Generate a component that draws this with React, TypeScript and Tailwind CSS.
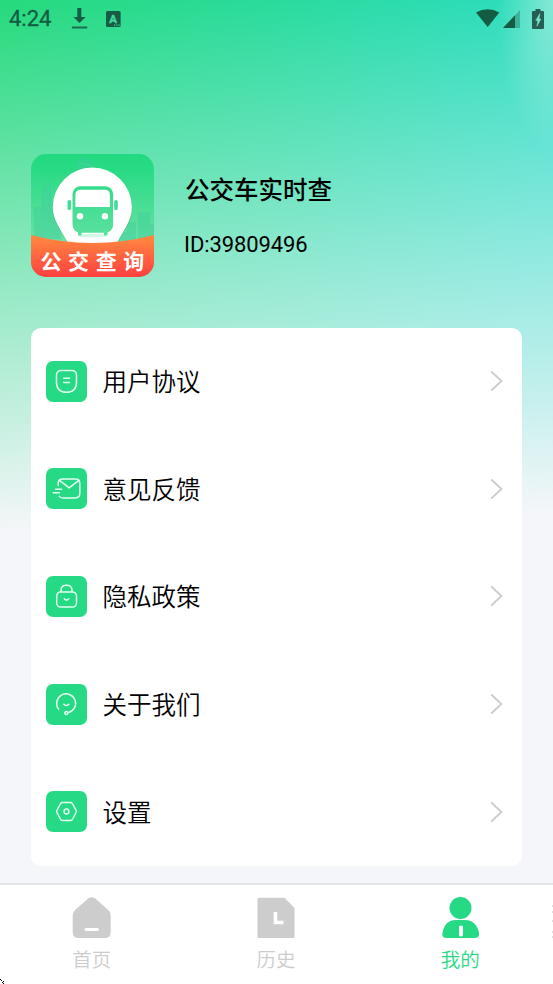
import type { ReactNode } from 'react';

type MenuItem = { label: string; icon: ReactNode };

const menu: MenuItem[] = [
  {
    label: '用户协议',
    icon: (
      <>
        <path d="M15.5 9.600h10q5 0 5 5v6.300q0 10.300-10 10.300t-10-10.300v-6.300q0-5 5-5z" />
        <path d="M17.700 17.200h5.800M17.700 21.600h5.800" />
      </>
    ),
  },
  {
    label: '意见反馈',
    icon: (
      <>
        <path d="M12.200 17.500v-2q0-4.600 4.600-4.600h12.400q4.600 0 4.600 4.600v9.800q0 4.600-4.600 4.600H16.800q-2.400 0-3.500-1.500" />
        <path d="M13.400 12.300l9.800 7.600 9.600-7.600M9.700 21.300h6M7.300 24.700h6" />
      </>
    ),
  },
  {
    label: '隐私政策',
    icon: (
      <>
        <rect x="10.700" y="15.900" width="19.800" height="15.200" rx="4.200" />
        <path d="M15 15.600v-1.200q0-5.200 5.500-5.200t5.500 5.200v1.200M18.300 22.700q2.200 2.600 4.400 0" />
      </>
    ),
  },
  {
    label: '关于我们',
    icon: (
      <>
        <path d="M12.700 25.300a9.500 9.500 0 1 1 9.400 3.400" />
        <circle cx="20.300" cy="29" r="1.500" />
        <path d="M17.900 20.200q2.500 2.600 5 0" />
      </>
    ),
  },
  {
    label: '设置',
    icon: (
      <>
        <path d="M16.500 11.400h8q1.200 0 1.800 1l3.800 6.900q.6 1.100 0 2.200l-3.800 7q-.6 1-1.800 1h-8q-1.200 0-1.800-1l-3.800-7q-.6-1.100 0-2.200l3.800-6.900q.6-1 1.800-1z" />
        <circle cx="20.500" cy="20.500" r="2.400" />
      </>
    ),
  },
];

function StatusBar() {
  return (
    <div className="flex h-[38px] items-center justify-between pl-[9px] pr-[9px] text-[#145c43]">
      <div className="flex items-center">
        <span className="w-[62px] font-['Roboto'] text-[22px] leading-[38px] [-webkit-text-stroke:0.3px_#145c43]">4:24</span>
        <svg className="h-[22px] w-[17px]" viewBox="0 0 17 22">
          <path d="M6.300 0h4v9h4.300L8.500 15 2.500 9h3.800z" fill="currentColor" />
          <path d="M.900 18.500h15.300v2H.900z" fill="currentColor" opacity=".85" />
        </svg>
        <svg className="ml-[18px] h-4 w-[15px]" viewBox="0 0 15 16">
          <rect width="14.600" height="16" rx="1.500" fill="currentColor" />
          <text x="7.200" y="12" textAnchor="middle" fill="#45d99c" stroke="#45d99c" strokeWidth=".4" className="font-['Roboto'] text-[11.500px] font-bold">A</text>
          <path d="M8 14.200h1.200M10.300 14.200h1.200M12.500 14.200h1.200" stroke="#45d99c" strokeWidth="1.200" />
        </svg>
      </div>
      <div className="flex items-center">
        <svg className="h-5 w-6" viewBox="0 0 24 20" fill="currentColor">
          <path d="M0 3.500Q11.700-2.800 23.300 3.500L11.700 18z" />
        </svg>
        <svg className="ml-[3px] mr-px h-[18px] w-[17px]" viewBox="0 0 17 18" fill="currentColor">
          <path d="M17 0v18H0z" opacity=".35" />
          <path d="M12 5.300V18H0z" />
        </svg>
        <svg className="ml-[11.500px] h-5 w-3" viewBox="0 0 12 20">
          <path d="M3.500 0h5v2H11q1 0 1 1v16q0 1-1 1H1q-1 0-1-1V3q0-1 1-1h2.500z" fill="#255f54" />
          <path d="M7.900 4.600L3.700 11.400h2.200l-1 5.800 4-7.200H7z" fill="#7be7d0" stroke="#7be7d0" strokeWidth=".5" />
        </svg>
      </div>
    </div>
  );
}

function AppLogo() {
  return (
    <svg className="h-[123px] w-[123px] shrink-0 rounded-[15px]" viewBox="0 0 123 123">
      <defs>
        <linearGradient id="sky" x1="0" y1="0" x2="0" y2="1">
          <stop offset="0" stopColor="#23d97f" />
          <stop offset=".12" stopColor="#29db84" />
          <stop offset=".7" stopColor="#68e0a5" />
        </linearGradient>
        <linearGradient id="banner" x1="0" y1="0" x2="0" y2="1">
          <stop offset="0.1" stopColor="#ff843f" />
          <stop offset="1" stopColor="#fe3f40" />
        </linearGradient>
        <linearGradient id="bus" x1="0" y1="32" x2="0" y2="82" gradientUnits="userSpaceOnUse">
          <stop offset="0" stopColor="#35dc8b" />
          <stop offset="1" stopColor="#5be0a0" />
        </linearGradient>
      </defs>
      <rect width="123" height="123" fill="url(#sky)" />
      <g fill="#3fcb9c" opacity=".4">
        <path d="M46 6l4-3 12 4v10H48zM11 34l9-6v60h-9zM3 53h10v32H3zM20 50h10v35H20zM107 58h12v28h-12zM96 68h9v20h-9zM88 78h10v10H88zM117 70h6v14h-6z" />
      </g>
      <g stroke="#4bdda0" strokeWidth=".8" opacity=".7">
        <path d="M14 33v50M17 31v52M6 55v27M9 55v27M24 52v32M27 52v32M109 62h8M109 66h8M109 70h8M109 74h8M109 78h8M98 72v14M101 72v14M48 9l13 3M48 13l13 3" />
      </g>
      <path d="M61.300 14.400a40 40 0 0 1 40 40c0 13-9 24-16.600 36H38C31 78 21.300 67 21.300 54.400a40 40 0 0 1 40-40z" fill="#219d68" opacity=".35" />
      <path d="M61.300 13.600a39.600 39.600 0 0 1 39.600 39.600c0 13.500-8.500 23.500-15.700 36.800H37.700C30.500 76.500 21.700 66.500 21.700 53.200a39.600 39.600 0 0 1 39.600-39.600z" fill="#fff" />
      <ellipse cx="61.500" cy="81.500" rx="15" ry="1.800" fill="#d3f7e5" />
      <g fill="url(#bus)">
        <rect x="41.500" y="32.200" width="40.600" height="46.600" rx="8" />
        <rect x="36.500" y="46" width="3.600" height="10" rx="1.600" />
        <rect x="83.200" y="46" width="3.600" height="10" rx="1.600" />
        <rect x="47" y="77" width="3.600" height="4.500" rx="1" />
        <rect x="73" y="77" width="3.600" height="4.500" rx="1" />
      </g>
      <path d="M50 35.800h23.500q5.400 0 5.400 5.400V53H44.400V41.200q0-5.400 5.600-5.400z" fill="#fff" />
      <circle cx="49" cy="62.200" r="3.200" fill="#fff" />
      <circle cx="74" cy="62.200" r="3.200" fill="#fff" />
      <path d="M0 81q61.500 16 123 0v42H0z" fill="url(#banner)" />
      <text x="9.500" y="114.500" fill="#fff" className="font-['Noto_Sans_CJK_SC',sans-serif] text-[21px] font-bold tracking-[6.600px]">公交查询</text>
    </svg>
  );
}

function MenuRow({ label, icon }: MenuItem) {
  return (
    <div className="flex flex-1 items-center pl-[15px] pr-[19px]">
      <svg className="h-[41px] w-[41px] rounded-[7px] bg-[#26da85]" viewBox="0 0 41 41" fill="none" stroke="#e2fff0" strokeWidth="1.500" strokeLinecap="round" strokeLinejoin="round">
        {icon}
      </svg>
      <span className="ml-[15.500px] flex-1 text-[24.500px] font-[350] leading-9 text-black">{label}</span>
      <svg className="h-[22px] w-[13px]" viewBox="0 0 13 22" fill="none" stroke="#cccccc" strokeWidth="1.800">
        <path d="M1.200 1.500L11.500 11 1.200 20.500" />
      </svg>
    </div>
  );
}

function Tab({ label, active, children }: { label: string; active?: boolean; children: ReactNode }) {
  return (
    <div className={`flex flex-1 flex-col items-center pt-[12px] ${active ? 'text-[#26da85]' : 'text-[#cdcdcd]'}`}>
      <svg className="h-[42px] w-[40px]" viewBox="0 0 40 42" fill="currentColor">{children}</svg>
      <span className="mt-[5px] mr-px text-[19.500px] font-[350] leading-[30px]">{label}</span>
    </div>
  );
}

export default function App() {
  return (
    <div className="relative flex h-[984px] w-[553px] flex-col overflow-hidden bg-[#f5f6f9] font-['Noto_Sans_CJK_SC',sans-serif]">
      <div className="absolute inset-x-0 top-0 h-[530px] bg-[linear-gradient(178deg,rgba(245,246,249,0)_1%,rgba(245,246,249,0.26)_26%,rgba(245,246,249,0.52)_51%,rgba(245,246,249,0.77)_76%,#f5f6f9_97%),radial-gradient(ellipse_56px_150px_at_100%_0%,rgba(190,240,225,0.6),rgba(190,240,225,0)),linear-gradient(105deg,#28da7d_0%,#28dba0_45%,#28dcc5_85%)]" />
      <div className="relative flex flex-1 flex-col">
        <StatusBar />
        <div className="mt-[116px] flex h-[123px] pl-[31px]">
          <AppLogo />
          <div className="ml-[31px] pt-[17px] text-black">
            <h1 className="text-[24.500px] font-medium leading-9">公交车实时查</h1>
            <p className="mt-[23px] -ml-px font-['Roboto'] text-[22px] leading-[30px] tracking-[-0.100px]">ID:39809496</p>
          </div>
        </div>
        <div className="mx-[31px] mt-[50.500px] flex h-[538px] flex-col rounded-[10px] bg-white">
          {menu.map((item) => (
            <MenuRow key={item.label} {...item} />
          ))}
        </div>
      </div>
      <nav className="relative flex h-[101px] border-t-2 border-[#e4e5e7] bg-white">
        <Tab label="首页">
          <path d="M16.500 1.300q3.200-2.200 6.400 0L35.500 12.300q3.200 2.900 3.200 5.700v17q0 6-6 6h-26q-6 0-6-6V18q0-2.800 3.200-5.700z" />
          <rect x="12.700" y="31" width="14" height="3" rx="1" fill="#fff" />
        </Tab>
        <Tab label="历史">
          <path d="M3 .800h25.500L38.500 11v28.500q0 1.500-1.500 1.500H3q-1.500 0-1.500-1.500V2.300Q1.500.800 3 .800z" />
          <path d="M19.500 15v10.500h8" fill="none" stroke="#fff" strokeWidth="3.600" />
        </Tab>
        <Tab label="我的" active>
          <circle cx="19.500" cy="11" r="11" />
          <path d="M15 23h9q11 0 14 12.500Q39 41 33 41H6Q0 41 1.700 35 4 23 15 23z" />
          <rect x="18" y="28.500" width="4" height="11" rx="1.800" fill="#fff" />
        </Tab>
        <svg className="absolute right-0 top-[18px] h-9 w-[2px]" viewBox="0 0 2 36" stroke="#dddddd">
          <path d="M1.500 2v2M1.500 8v2M1.500 17v2M1.500 28v2M1.500 33v2" />
        </svg>
        <svg className="absolute bottom-0 left-0 h-[5px] w-[5px]" viewBox="0 0 5 5">
          <path d="M0 0h1v1H0zM1 1h1v1H1zM3 2h1v1H3zM2 3h1v1H2zM3 4h1v1H3z" />
        </svg>
      </nav>
    </div>
  );
}
